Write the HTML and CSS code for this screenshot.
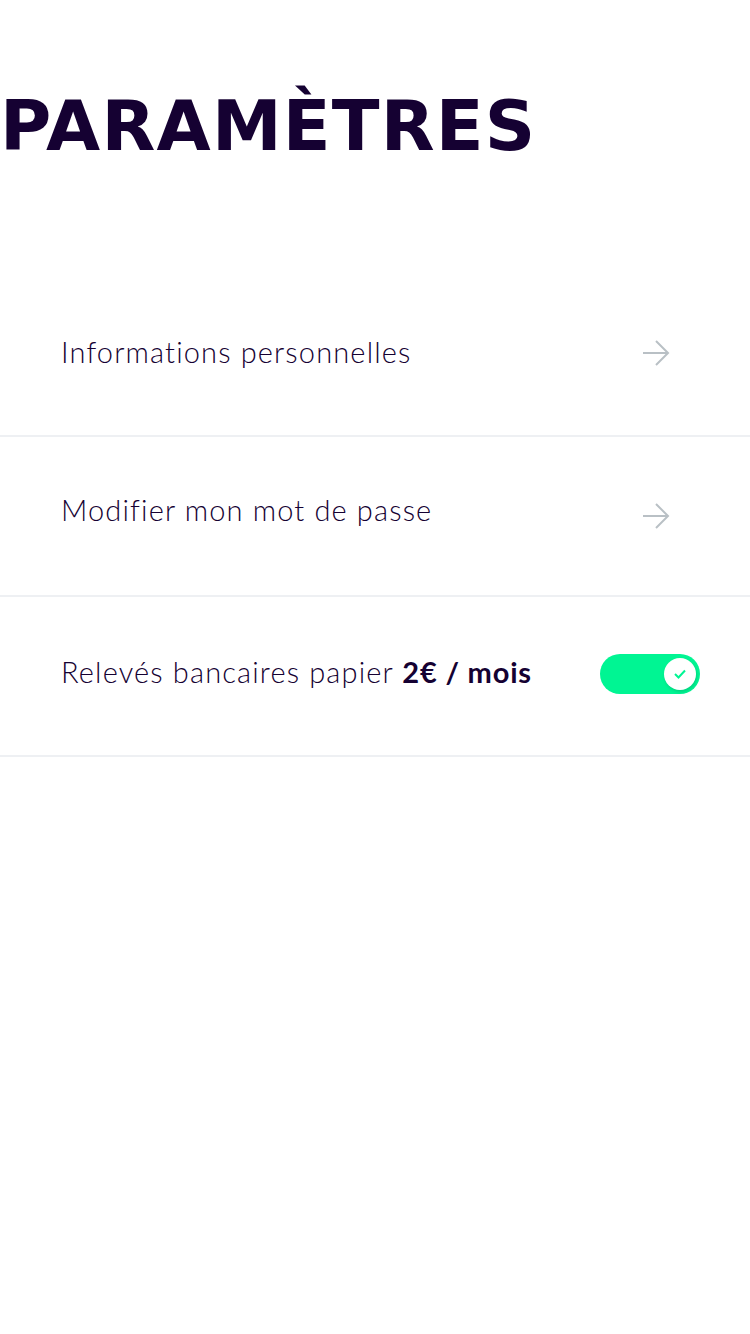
FILE: index.html
```html
<!DOCTYPE html>
<html lang="fr">
<head>
<meta charset="utf-8">
<link rel="stylesheet" href="styles.css">
</head>
<body>
<main class="page">
  <h1 class="title">PARAMÈTRES</h1>
  <ul class="settings">
    <li class="row">
      <span class="label">Informations personnelles</span>
      <svg class="arrow" width="28" height="26" viewBox="0 0 28 26"><path d="M1 13H26M14 1L26 13L14 25" fill="none" stroke="#b9c0c5" stroke-width="2"/></svg>
    </li>
    <li class="row">
      <span class="label">Modifier mon mot de passe</span>
      <svg class="arrow" width="28" height="26" viewBox="0 0 28 26"><path d="M1 13H26M14 1L26 13L14 25" fill="none" stroke="#b9c0c5" stroke-width="2"/></svg>
    </li>
    <li class="row">
      <span class="label">Relevés bancaires papier <strong>2€ / mois</strong></span>
      <span class="toggle"><span class="knob"><svg width="14" height="12" viewBox="0 0 14 12"><path d="M2 6L5.5 9.5L12 2.5" fill="none" stroke="#00f593" stroke-width="2"/></svg></span></span>
    </li>
  </ul>
</main>
</body>
</html>
```
FILE: styles.css
```css
* { box-sizing: border-box; }
html, body { margin: 0; padding: 0; background: #fff; }
body { font-family: "Lato", "Open Sans", sans-serif; color: #150132; }
.page { width: 750px; }
.title {
  margin: 0;
  padding: 91px 0 0 0;
  font-family: "DejaVu Sans", "Lato", sans-serif;
  font-size: 70px;
  line-height: 70px;
  font-weight: 700;
  letter-spacing: 1.2px;
  color: #150132;
}
.settings { list-style: none; margin: 116px 0 0 0; padding: 0; }
.row {
  height: 160px;
  display: flex;
  align-items: center;
  padding: 0 50px 0 61px;
  border-bottom: 2px solid #eef0f3;
}
.label {
  flex: 1;
  font-size: 29px;
  font-weight: 300;
  color: #150132;
  letter-spacing: 1.15px;
  margin-bottom: 10px;
}
.row:nth-child(2) .label { margin-bottom: 14px; }
.row:nth-child(2) .arrow { margin-bottom: 0; }
.label strong { font-weight: 700; letter-spacing: 0.8px; }
.arrow { margin-right: 30px; margin-bottom: 6px; }
.toggle {
  width: 100px;
  height: 40px;
  border-radius: 20px;
  background: #00f593;
  display: flex;
  align-items: center;
  justify-content: flex-end;
  padding-right: 4px;
  margin-bottom: 4px;
}
.knob {
  width: 32px;
  height: 32px;
  border-radius: 50%;
  background: #fff;
  box-shadow: 1px 2px 3px rgba(0,120,70,0.25);
  display: flex;
  align-items: center;
  justify-content: center;
}
```
